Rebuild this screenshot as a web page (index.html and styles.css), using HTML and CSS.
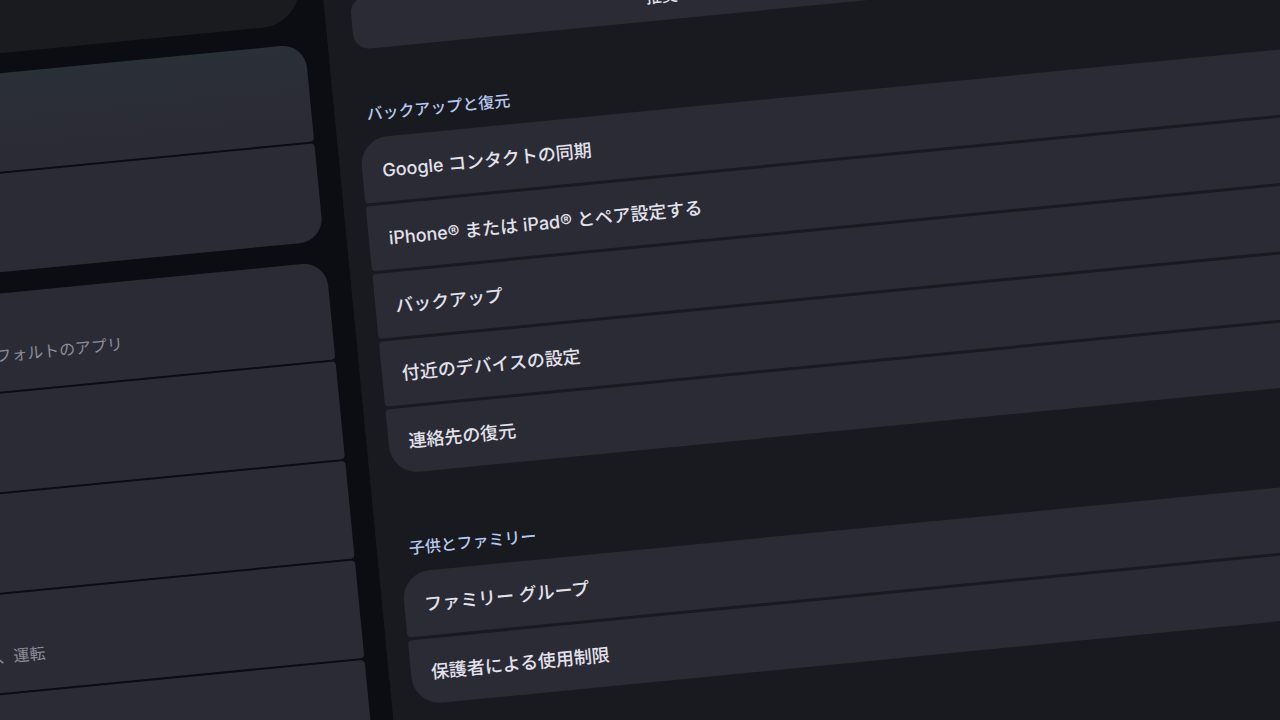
FILE: index.html
```html
<!DOCTYPE html>
<html lang="ja">
<head>
<meta charset="utf-8">
<meta name="viewport" content="width=device-width, initial-scale=1">
<title>設定</title>
<link rel="stylesheet" href="styles.css">
</head>
<body>
<div class="stage">
<div class="board">
  <aside class="nav">
    <div class="search-panel"></div>
    <ul class="nav-group nav-group-tinted">
      <li class="nav-row"></li>
      <li class="nav-row"></li>
    </ul>
    <ul class="nav-group">
      <li class="nav-row"><p class="summary summary-apps">フォルトのアプリ</p></li>
      <li class="nav-row"></li>
      <li class="nav-row"></li>
      <li class="nav-row"><p class="summary summary-modes">、運転</p></li>
      <li class="nav-row"></li>
    </ul>
  </aside>
  <main class="detail">
    <div class="tabs"><button class="tab" type="button">推奨</button></div>
    <section>
      <h2 class="heading">バックアップと復元</h2>
      <ul class="group">
        <li><button class="row" type="button">Google コンタクトの同期</button></li>
        <li><button class="row" type="button">iPhone® または iPad® とペア設定する</button></li>
        <li><button class="row" type="button">バックアップ</button></li>
        <li><button class="row" type="button">付近のデバイスの設定</button></li>
        <li><button class="row" type="button">連絡先の復元</button></li>
      </ul>
    </section>
    <section>
      <h2 class="heading">子供とファミリー</h2>
      <ul class="group">
        <li><button class="row" type="button">ファミリー グループ</button></li>
        <li><button class="row" type="button">保護者による使用制限</button></li>
      </ul>
    </section>
  </main>
</div>
</div>
</body>
</html>
```
FILE: styles.css
```css
* {
  box-sizing: border-box;
}

body {
  margin: 0;
  background: #191a20;
  color: #e3e2ec;
  font-family: Inter, "Noto Sans CJK JP", sans-serif;
}

ul,
h2,
p {
  margin: 0;
  padding: 0;
  list-style: none;
}

.stage {
  height: 100vh;
  overflow: hidden;
}

/* The whole settings screen is shown tilted, bleeding off every edge. */
.board {
  display: grid;
  grid-template-columns: 402px 1fr;
  width: calc(100% + 120px);
  min-height: 120vh;
  margin-left: -80px;
  transform: rotate(-5.55deg);
  transform-origin: 80px 0;
}

.nav {
  display: flex;
  flex-direction: column;
  gap: 20px;
  padding-right: 23px;
  background: #0c0d13;
}

.search-panel {
  height: 53px;
  border-radius: 0 0 40px 0;
  background: #1a1b1f;
}

.nav-group {
  display: grid;
  gap: 2px;
}

.nav-group-tinted {
  margin-bottom: 1px;
}

.nav-row {
  height: 98px;
  padding-top: 50px;
  border-radius: 4px;
  background: #2b2b35;
}

.nav-row:first-child {
  border-top-right-radius: 24px;
}

.nav-row:last-child {
  border-bottom-right-radius: 24px;
}

.nav-group-tinted .nav-row:first-child {
  background: linear-gradient(#2a3037, #2b2b35 80%);
}

.summary {
  color: #8b8b98;
  font-size: 16px;
  line-height: 24px;
  text-align: right;
}

.summary-apps {
  padding-right: 210px;
}

.summary-modes {
  padding-right: 317px;
}

.detail {
  padding-left: 22px;
  background: #191a20;
}

.tabs {
  display: flex;
  padding: 32px 0 0 4px;
}

.tab {
  width: 622px;
  height: 52px;
  padding: 4px 0 0;
  border: 0;
  border-radius: 16px;
  background: #2b2b36;
  color: inherit;
  font: 500 16px/24px Inter, "Noto Sans CJK JP", sans-serif;
}

.heading {
  padding: 53px 10px 12px;
  color: #b5c8ee;
  font-size: 16px;
  font-weight: 500;
  line-height: 24px;
}

section + section .heading {
  padding-top: 63px;
}

.group {
  display: grid;
  gap: 3px;
}

.row {
  display: block;
  width: 100%;
  height: 65px;
  padding: 2px 20px 0;
  border: 0;
  border-radius: 4px;
  background: #2b2b36;
  color: inherit;
  font: 500 18px/26px Inter, "Noto Sans CJK JP", sans-serif;
  text-align: left;
}

.group li:first-child .row {
  border-top-left-radius: 28px;
}

.group li:last-child .row {
  border-bottom-left-radius: 28px;
}
```
